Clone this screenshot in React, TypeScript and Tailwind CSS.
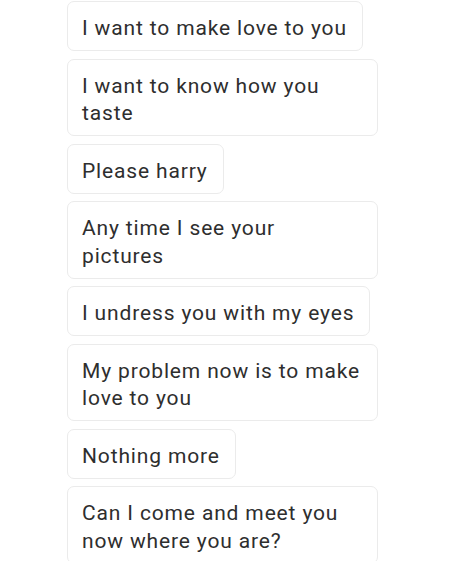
const messages: string[][] = [
  ['I want to make love to you'],
  ['I want to know how you', 'taste'],
  ['Please harry'],
  ['Any time I see your', 'pictures'],
  ['I undress you with my eyes'],
  ['My problem now is to make', 'love to you'],
  ['Nothing more'],
  ['Can I come and meet you', 'now where you are?'],
];

function Bubble({ lines }: { lines: string[] }) {
  const multi = lines.length > 1;
  return (
    <div
      className={`rounded-[7px] border border-[#ebebeb] bg-white pl-[14px] pr-[15px] pt-[13px] pb-[7.5px] text-[21px] leading-[27.5px] tracking-[0.85px] text-[#2e2e2e] ${
        multi ? 'w-[311px]' : ''
      }`}
    >
      {lines.map((line, i) => (
        <div key={i} className="whitespace-nowrap">
          {line}
        </div>
      ))}
    </div>
  );
}

export default function App() {
  return (
    <div
      className="h-[561px] w-[458px] overflow-hidden bg-white pl-[67px] pt-[1px]"
      style={{ fontFamily: 'Roboto, "Noto Sans", sans-serif' }}
    >
      <div className="flex flex-col items-start gap-[7.5px]">
        {messages.map((lines, i) => (
          <Bubble key={i} lines={lines} />
        ))}
      </div>
    </div>
  );
}
